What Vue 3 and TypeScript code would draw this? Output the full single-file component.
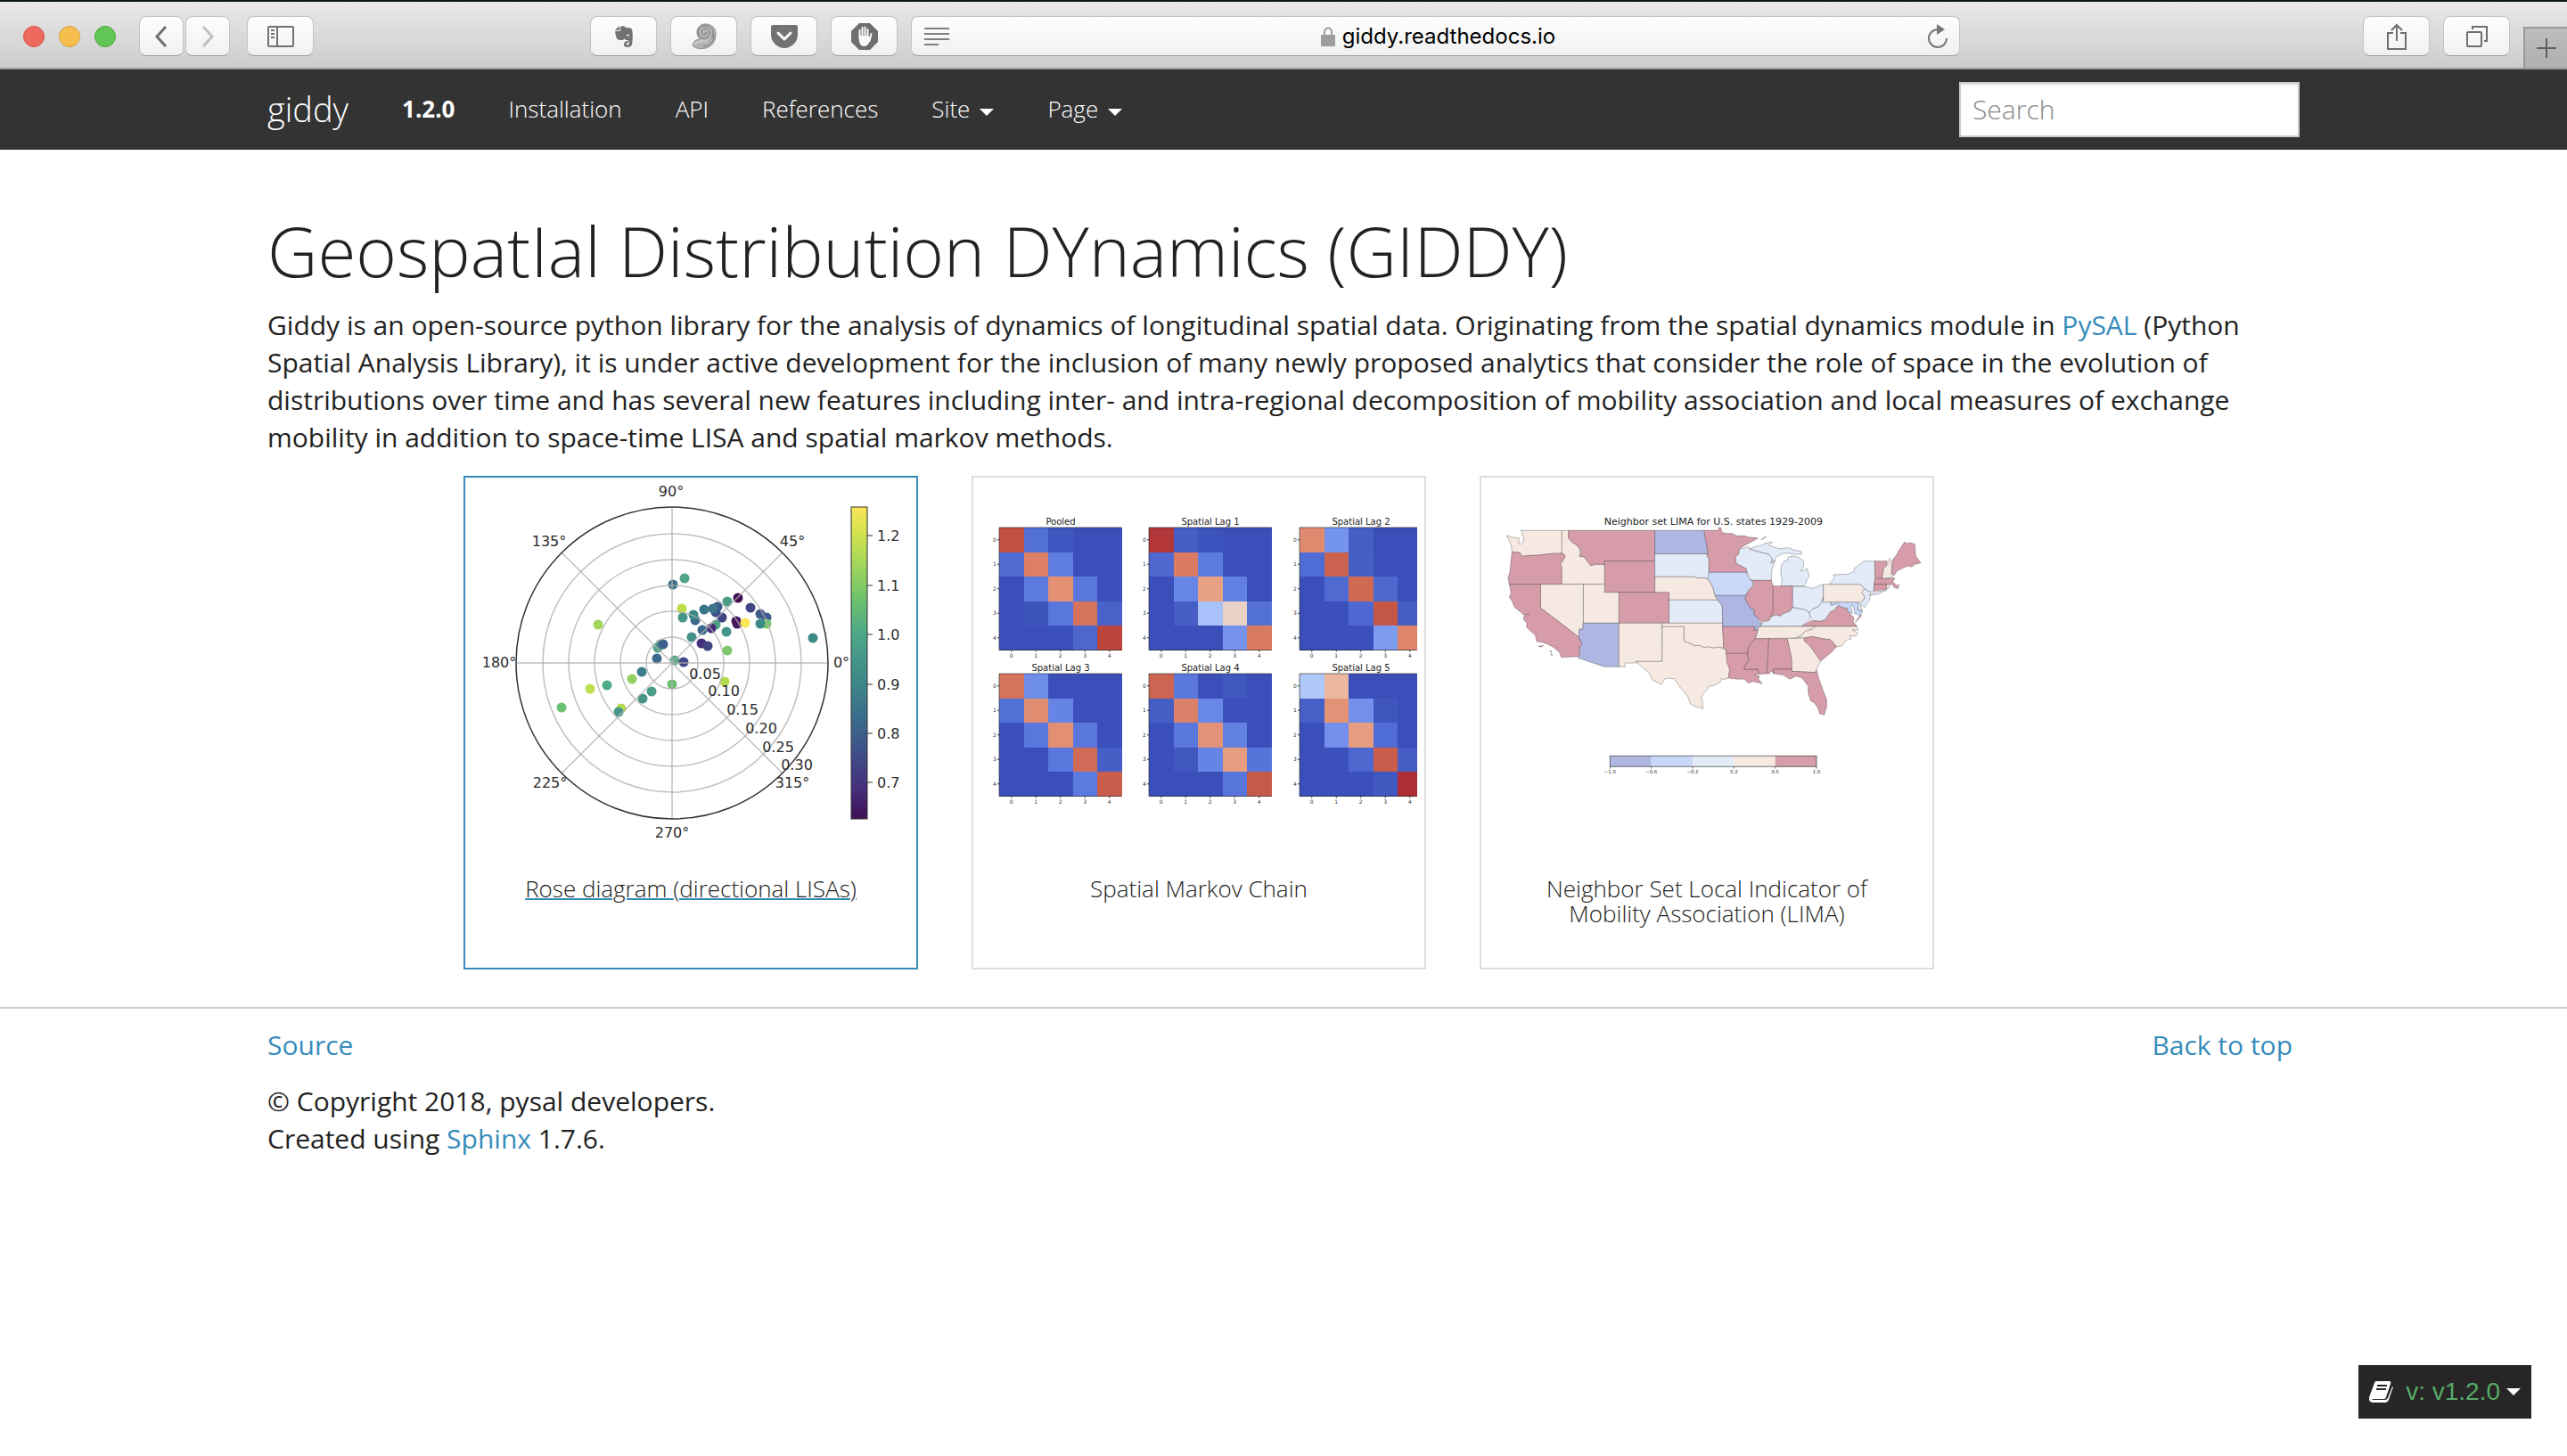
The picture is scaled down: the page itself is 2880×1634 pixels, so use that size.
<script setup lang="ts">
interface Dot { x: number; y: number; c: string }
interface Label { x: number; y: number; t: string }
interface Region { f: string; p: string }

const dots: Dot[] = ([
  [246, 113, '#4fa487'], [233, 120, '#3d7189'], [243, 147, '#bede48'], [244, 157, '#469486'],
  [258, 160, '#3b6a8d'], [256, 154, '#3a8a88'], [268, 148, '#37758a'], [281, 151, '#3b528a'],
  [283, 145, '#3b5c8c'], [278, 147, '#3a758b'], [294, 139, '#4c9e88'], [306, 135, '#3f0f54'],
  [288, 157, '#414584'], [281, 165, '#4fa186'], [276, 169, '#472b78'], [266, 171, '#3a6a8c'],
  [254, 179, '#43918a'], [265, 186, '#45307c'], [272, 189, '#424583'], [293, 173, '#45948a'],
  [304, 161, '#45195f'], [305, 164, '#45195f'], [314, 163, '#fbe555'], [320, 146, '#3f4483'],
  [331, 153, '#3f5a8b'], [338, 157, '#3d5b8b'], [338, 164, '#79c96a'], [331, 164, '#3b8b8a'],
  [294, 194, '#7ec66b'], [390, 180, '#3b8b88'], [149, 165, '#a2d55c'], [216, 191, '#4ea287'],
  [219, 187, '#469486'], [222, 187, '#3c5f8d'], [215, 203, '#3b6a8d'], [235, 205, '#56a989'],
  [245, 207, '#414584'], [198, 218, '#3c7f8b'], [187, 226, '#94d063'], [232, 232, '#6abf70'],
  [159, 233, '#4fab86'], [140, 237, '#bcde50'], [108, 258, '#69c371'], [209, 240, '#4a9e88'],
  [199, 248, '#469589'], [175, 259, '#b5db4c'], [172, 263, '#459889'], [291, 229, '#b2dc4c'],
] as [number, number, string][]).map(([x, y, c]) => ({ x, y, c }))

const rings = [29, 58, 87, 116, 145]

const angles: Label[] = [
  { x: 231, y: 21, t: '90°' }, { x: 367, y: 77, t: '45°' }, { x: 422, y: 213, t: '0°' },
  { x: 94, y: 77, t: '135°' }, { x: 38, y: 213, t: '180°' }, { x: 95, y: 348, t: '225°' },
  { x: 232, y: 404, t: '270°' }, { x: 367, y: 348, t: '315°' },
]
const radii: Label[] = [
  { x: 269, y: 226, t: '0.05' }, { x: 290, y: 245, t: '0.10' }, { x: 311, y: 266, t: '0.15' },
  { x: 332, y: 287, t: '0.20' }, { x: 351, y: 308, t: '0.25' }, { x: 372, y: 328, t: '0.30' },
]
const scaleTicks: Label[] = [
  { x: 462, y: 65, t: '1.2' }, { x: 462, y: 121, t: '1.1' }, { x: 462, y: 176, t: '1.0' },
  { x: 462, y: 232, t: '0.9' }, { x: 462, y: 287, t: '0.8' }, { x: 462, y: 342, t: '0.7' },
]
const viridis = ['#3f0f54', '#45307c', '#3f4b87', '#3a668b', '#3c7f8b', '#439488', '#4ea986', '#6cc06e', '#9bd35c', '#cbe14f', '#fbe555']

const low = '#3b4fbb'
const matrices = [
  { title: 'Pooled', x: 29, y: 56, rows: [
    ['#c25042', '#5370d6', '#3e56c0', low, low], ['#4f6ad1', '#dd7e65', '#5f7ee0', low, low],
    [low, '#5c7bdf', '#e38f73', '#5977dc', low], [low, '#3e54bd', '#5977dc', '#d5735c', '#4962ca'],
    [low, low, low, '#4d67cf', '#bb443d']] },
  { title: 'Spatial Lag 1', x: 197, y: 56, rows: [
    ['#b33639', '#455ec5', '#3c52bc', low, low], ['#4f69d1', '#db7b63', '#5c7bdf', low, low],
    [low, '#6787e6', '#e8a085', '#6180e1', low], [low, '#455dc4', '#a9c2fb', '#ead2c6', '#5270d5'],
    [low, low, low, '#7593ec', '#d97b62']] },
  { title: 'Spatial Lag 2', x: 366, y: 56, rows: [
    ['#e08b70', '#7494ed', '#455ec5', low, low], ['#4f6dd4', '#cb6350', '#455fc6', low, low],
    [low, '#4f6bd2', '#d06a54', '#4d68cf', low], [low, low, '#4e69d1', '#c45745', '#445cc3'],
    [low, low, low, '#7d9cf0', '#df856c']] },
  { title: 'Spatial Lag 3', x: 29, y: 220, rows: [
    ['#d5735c', '#6f8eea', low, low, low], ['#5270d5', '#e18d72', '#6584e4', low, low],
    [low, '#5977dc', '#e38f73', '#5a78dc', low], [low, low, '#5977dc', '#d06b57', '#465fc6'],
    [low, low, low, '#5c7adf', '#ca5e4c']] },
  { title: 'Spatial Lag 4', x: 197, y: 220, rows: [
    ['#cd6553', '#5a78dc', low, '#3f58c0', low], ['#445ec5', '#dc8169', '#6887e6', low, low],
    [low, '#5977dc', '#e29377', '#6281e1', low], [low, '#3f57be', '#6684e5', '#e79d80', '#5774da'],
    [low, low, low, '#5875db', '#c65a49']] },
  { title: 'Spatial Lag 5', x: 366, y: 220, rows: [
    ['#afc7f9', '#ecb79f', low, low, low], ['#4660c8', '#e29276', '#7290eb', '#3f56be', low],
    [low, '#7391ec', '#e79d80', '#4f6dd4', low], [low, low, '#4d67cf', '#c95c4a', '#445cc3'],
    [low, low, low, '#4059c1', '#ad2f35']] },
]
const cell = 27.5
/* The heat map picture is cut off at this x, through the last column of the right-hand grids. */
const cut = 498
const span = (left: number, width: number) => Math.min(width, cut - left)

const red = '#d69ca9'
const cream = '#f6e9e1'
const pale = '#e3ebf9'
const light = '#c9d7f9'
const violet = '#aeb6e1'

const west: Region[] = [
  { f: cream, p: '78,76 217,76 217,153 180,154 140,159 110,160 82,163 76,151 49,148 47,130 42,115 31,92 50,99 72,101 75,110 70,120 80,122 88,112 88,96 82,88 84,82' },
  { f: red, p: '49,148 76,151 82,163 110,160 140,159 180,154 220,153 229,162 221,178 212,190 217,200 217,257 40,257 36,236 42,215 45,185' },
  { f: cream, p: '217,76 239,76 239,102 252,116 268,126 278,138 277,163 290,164 302,178 314,194 340,190 361,190 361,257 217,257 217,200 212,190 221,178 229,162 220,153 217,153' },
  { f: red, p: '239,76 530,76 530,179 361,179 361,190 340,190 326,189 314,194 302,178 290,164 277,163 282,148 278,138 268,126 252,116 239,102' },
  { f: red, p: '361,179 530,179 530,284 361,284' },
  { f: cream, p: '289,257 361,257 361,284 409,284 409,388 289,388' },
  { f: cream, p: '145,257 289,257 289,388 287,409 276,408 274,435 145,336' },
  { f: red, p: '40,257 145,257 145,336 274,435 285,457 276,472 278,490 271,500 215,503 208,485 190,470 170,459 150,452 132,450 128,430 112,415 98,402 99,388 88,376 90,362 106,358 86,359 80,352 58,335 50,315 40,300 46,285' },
  { f: violet, p: '289,388 409,388 409,535 360,535 271,505 278,490 276,472 285,457 274,435 276,408 287,409' },
  { f: red, p: '409,284 578,284 578,388 409,388' },
  { f: cream, p: '409,388 554,388 554,517 467,517 470,522 430,522 430,535 409,535' },
  { f: violet, p: '530,76 696,76 703,100 705,130 710,155 530,155' },
  { f: pale, p: '530,155 709,155 705,162 712,170 712,230 708,240 700,236 675,236 660,232 530,232' },
  { f: cream, p: '530,232 660,232 675,236 700,236 710,244 718,255 726,270 730,290 743,310 578,310 578,284 530,284' },
  { f: pale, p: '578,310 743,310 750,320 757,332 758,388 578,388' },
  { f: cream, p: '554,388 758,388 758,402 761,440 761,472 745,468 730,472 712,468 695,470 680,463 665,464 645,455 628,450 628,400 555,400' },
  { f: cream, p: '555,400 628,400 628,450 645,455 665,464 680,463 695,470 712,468 730,472 745,468 770,478 770,490 778,520 782,545 777,573 762,578 754,574 750,586 730,598 712,600 708,610 695,622 686,640 690,652 692,676 668,670 650,660 640,634 612,600 595,575 565,573 552,595 520,578 514,560 490,538 467,517 554,517' },
  { f: red, p: '138,466 148,464 155,463 148,468' },
  { f: red, p: '178,480 183,484 180,487' },
  { f: red, p: '180,490 185,496 182,496' },
]

const east: Region[] = [
  { f: red, p: '6,76 55,76 55,66 63,68 65,82 82,86 100,86 115,94 140,94 155,98 187,102 150,122 125,137 122,155 112,165 113,185 130,195 148,205 150,217 22,217 22,170 15,162 19,152 15,130 8,95' },
  { f: pale, p: '125,137 140,136 155,130 160,140 200,150 225,157 235,170 230,188 246,176 236,200 232,220 232,244 165,244 150,217 148,205 130,195 113,185 112,165 122,155' },
  { f: pale, p: '158,138 180,130 200,126 212,118 236,115 224,126 240,132 260,137 290,134 310,142 332,146 335,155 310,157 290,152 268,154 250,165 235,184 234,168 222,155 200,150' },
  { f: pale, p: '265,263 268,240 264,220 265,195 276,178 282,182 290,165 305,162 325,167 340,180 341,195 332,212 342,210 352,204 360,230 352,240 348,256 342,263' },
  { f: light, p: '22,217 150,217 152,230 160,242 172,250 172,262 160,273 152,280 148,295 42,295 36,270 28,250 18,238' },
  { f: red, p: '165,244 232,244 238,263 238,345 232,365 226,378 210,380 197,384 188,372 172,358 175,345 160,335 143,306 148,292 160,273 172,262 172,250' },
  { f: red, p: '238,263 304,263 304,335 295,348 275,355 262,364 245,360 228,368 238,345' },
  { f: pale, p: '304,265 345,265 370,271 407,257 407,300 400,320 388,335 375,338 360,352 350,345 330,340 304,335' },
  { f: violet, p: '42,295 148,295 143,306 160,335 175,345 172,358 188,372 190,385 200,388 196,400 190,400 186,412 172,412 178,400 68,400 67,330 52,312' },
  { f: pale, p: '196,398 203,386 226,378 228,368 245,360 262,364 275,355 295,348 304,335 330,340 350,345 358,352 365,370 350,385 335,398' },
  { f: pale, p: '360,352 375,338 388,335 400,320 407,300 407,317 433,317 433,328 455,320 468,328 455,330 430,355 415,375 400,382 375,380 362,366' },
  { f: red, p: '335,398 365,380 400,382 415,375 430,350 445,345 455,330 470,335 490,340 496,355 510,370 508,384 520,398' },
  { f: red, p: '515,384 530,362 536,362 524,376' },
  { f: light, p: '433,317 523,317 525,345 540,348 532,362 512,355 510,338 506,325 500,335 505,355 490,350 488,338 470,335 455,322 433,328' },
  { f: pale, p: '523,317 530,322 538,345 525,345' },
  { f: cream, p: '407,257 530,257 547,272 537,285 548,303 530,317 407,317' },
  { f: pale, p: '545,272 566,283 562,310 545,335 532,325 548,303 537,285' },
  { f: pale, p: '427,257 445,235 440,225 490,223 510,215 512,203 545,179 580,179 580,240 577,280 566,283 545,272 532,257' },
  { f: pale, p: '563,294 580,284 618,277 592,290' },
  { f: red, p: '580,179 622,179 620,195 610,202 605,238 582,238' },
  { f: cream, p: '624,190 630,170 636,180 637,226 640,234 605,238 610,202 620,195' },
  { f: red, p: '637,222 640,175 652,160 662,142 680,115 690,120 700,117 715,122 718,162 735,185 715,190 705,198 690,196 670,205 655,212 645,228' },
  { f: red, p: '582,238 637,237 648,236 640,250 660,264 662,256 658,272 646,268 638,257 578,257' },
  { f: red, p: '578,257 620,257 620,274 577,280' },
  { f: cream, p: '620,257 630,257 630,268 620,274' },
  { f: cream, p: '190,400 380,399 370,408 345,416 335,428 316,438 178,440 186,412' },
  { f: cream, p: '380,399 520,399 524,412 505,410 524,422 516,432 495,430 502,440 484,446 470,465 452,467 430,443 400,440 370,433 343,438 316,438 335,428 345,416 370,408' },
  { f: red, p: '68,400 178,400 172,412 186,412 178,440 165,455 155,470 152,490 80,490 80,478 71,472' },
  { f: red, p: '80,490 152,490 156,510 145,530 140,543 186,543 190,558 175,562 192,566 188,576 202,592 186,588 170,584 155,590 140,576 120,577 88,573 92,545 82,520' },
  { f: red, p: '178,440 224,440 217,558 190,560 186,543 140,543 145,530 156,510 152,490 155,470 165,455' },
  { f: red, p: '224,440 286,440 295,480 301,510 300,543 238,543 240,558 230,548 226,558 217,558' },
  { f: cream, p: '286,440 343,438 343,448 360,462 380,490 398,515 390,530 384,546 380,554 302,550 301,510 295,480' },
  { f: red, p: '343,438 370,433 400,440 430,443 452,467 430,490 415,502 398,515 380,490 360,462 343,448' },
  { f: red, p: '238,543 300,543 302,550 380,554 384,546 392,575 404,608 418,645 418,670 410,697 395,693 388,672 376,656 365,650 356,625 356,600 335,572 315,566 295,577 270,562 240,558' },
  { f: pale, p: '197,107 208,99 216,97 206,104' },
]

const bands = [violet, light, pale, cream, red]
const bandLabels = ['−1.0', '−0.6', '−0.2', '0.2', '0.6', '1.0']
</script>

<template>
  <div class="window">
    <header class="toolbar">
      <div class="side">
        <div class="lights">
          <button class="light close" aria-label="Close"></button>
          <button class="light minimise" aria-label="Minimise"></button>
          <button class="light expand" aria-label="Full screen"></button>
        </div>
        <div class="history">
          <button class="tool narrow" aria-label="Back">
            <svg width="16" height="26" viewBox="0 0 16 26"><path d="M13 2 3 13l10 11" fill="none" stroke="#6f6f6f" stroke-width="3" /></svg>
          </button>
          <button class="tool narrow" aria-label="Forward">
            <svg width="16" height="26" viewBox="0 0 16 26"><path d="m3 2 10 11L3 24" fill="none" stroke="#c0c0c0" stroke-width="3" /></svg>
          </button>
        </div>
        <button class="tool" aria-label="Sidebar">
          <svg width="30" height="24" viewBox="0 0 30 24" fill="none" stroke="#727272" stroke-width="2">
            <rect x="1" y="1" width="28" height="22" rx="1" /><path d="M11 1v22M4 5h4M4 9h4M4 13h4" />
          </svg>
        </button>
      </div>

      <div class="centre">
        <button class="tool" aria-label="Evernote">
          <svg width="20" height="24" viewBox="0 0 20 24">
            <path fill="#727272" d="M5 0v5H0L5 0zM6 1c2-1 5-1 6 1 3 0 6 0 7 2 1 4 1 12 0 17-1 2-2 3-5 3-3 0-4-1-4-3 0-3 2-4 5-4v2c-2 0-3 1-2 2s3 0 3-2c0-2-1-3-3-3s-2-1-2-2c-1 2-3 2-5 2-4 0-5-3-6-10h5c1 0 1-1 1-5z" />
            <path fill="#f8f8f8" d="M13 11c0-2 3-2 3 1-1-1-2-1-3-1z" />
          </svg>
        </button>
        <button class="tool" aria-label="Shell">
          <svg width="30" height="30" viewBox="0 0 30 30" fill="none">
            <path d="M16 1c8 0 12 5 12 11 0 8-4 14-11 16-6 1-11 1-15-3 1-5 4-7 9-7-3-2-4-5-4-8 0-5 4-9 9-9z" fill="#b4b4b4" stroke="#8a8a8a" />
            <path d="M26 13c0 8-5 13-12 13M19 20c4-2 6-5 6-9 0-5-4-8-9-8s-8 3-8 7 3 7 7 7 6-3 6-6-2-5-5-5-4 2-4 4 1 3 3 3 2-1 2-3" stroke="#747474" stroke-width="1" />
            <path d="M4 24c3-3 5-3 9-3M11 19c4 2 8 2 12-3" stroke="#e0e0e0" stroke-width="1" />
          </svg>
        </button>
        <button class="tool" aria-label="Pocket">
          <svg width="30" height="26" viewBox="0 0 30 26">
            <path fill="#727272" d="M2 0h26c1 0 2 1 2 2v9c0 8-7 15-15 15S0 19 0 11V2c0-1 1-2 2-2z" />
            <path d="m8 9 7 7 7-7" fill="none" stroke="#fafafa" stroke-width="3" stroke-linecap="round" stroke-linejoin="round" />
          </svg>
        </button>
        <button class="tool" aria-label="AdBlock">
          <svg width="30" height="30" viewBox="0 0 30 30">
            <path fill="#6e6e6e" d="M9 0h12l9 9v12l-9 9H9l-9-9V9z" />
            <path fill="none" stroke="#fafafa" stroke-width="2" stroke-linecap="round" d="M9.500 16V8M12.500 14V5M15.500 14V4.500M18.500 14V7M20.500 20l2-8" />
            <path fill="#fafafa" d="M8.500 14h11l2 3c-1 5-3 9-7 9-5 0-6-5-6-12z" />
          </svg>
        </button>
        <div class="address">
          <svg width="28" height="22" viewBox="0 0 28 22" stroke="#7f7f7f" stroke-width="2"><path d="M0 2h28M0 8h28M0 14h28M0 20h16" /></svg>
          <label class="location">
            <svg width="16" height="22" viewBox="0 0 16 22"><path d="M4 10V6c0-6 8-6 8 0v4" fill="none" stroke="#9d9d9d" stroke-width="2" /><rect y="9" width="16" height="13" rx="1" fill="#9d9d9d" /></svg>
            <input class="url" type="text" value="giddy.readthedocs.io" aria-label="Address">
          </label>
          <button class="reload" aria-label="Reload">
            <svg width="24" height="28" viewBox="0 0 24 28"><path d="M12 6a10 10 0 1 0 10 10" fill="none" stroke="#777" stroke-width="2" /><path d="M11 0v12l9-6z" fill="#777" /></svg>
          </button>
        </div>
      </div>

      <div class="side end">
        <button class="tool" aria-label="Share">
          <svg width="24" height="30" viewBox="0 0 24 30" fill="none" stroke="#6e6e6e" stroke-width="2"><path d="M8 11H2v18h20V11h-6M12 20V2M6 8l6-6 6 6" /></svg>
        </button>
        <button class="tool" aria-label="Show all tabs">
          <svg width="24" height="24" viewBox="0 0 24 24" fill="none" stroke="#6e6e6e" stroke-width="2"><rect x="1" y="7" width="16" height="16" rx="1" /><path d="M7 4V1h16v16h-3" /></svg>
        </button>
        <button class="new-tab" aria-label="New tab">
          <svg width="22" height="22" viewBox="0 0 22 22" stroke="#5f5f5f" stroke-width="2"><path d="M11 0v22M0 11h22" /></svg>
        </button>
      </div>
    </header>

    <nav class="navbar">
      <div class="container bar">
        <a class="brand" href="#">giddy</a>
        <span class="release">1.2.0</span>
        <a class="link" href="#installation">Installation</a>
        <a class="link" href="#api">API</a>
        <a class="link" href="#references">References</a>
        <button class="link">Site<span class="caret"></span></button>
        <button class="link">Page<span class="caret"></span></button>
        <form class="search"><input type="text" placeholder="Search" aria-label="Search"></form>
      </div>
    </nav>

    <main class="container">
      <h1>GeospatIal Distribution DYnamics (GIDDY)</h1>
      <p>
        Giddy is an open-source python library for the analysis of dynamics of longitudinal spatial data. Originating from the spatial dynamics module in <a href="#pysal">PySAL</a> (Python Spatial Analysis Library), it is under active development for the inclusion of many newly proposed analytics that consider the role of space in the evolution of distributions over time and has several new features including inter- and intra-regional decomposition of mobility association and local measures of exchange mobility in addition to space-time LISA and spatial markov methods.
      </p>

      <div class="gallery">
        <a class="card active" href="#rose">
          <svg class="figure" viewBox="0 0 506 420">
            <defs>
              <linearGradient id="viridis" x1="0" y1="1" x2="0" y2="0">
                <stop v-for="(c, i) in viridis" :key="c" :offset="i / 10" :stop-color="c" />
              </linearGradient>
            </defs>
            <circle v-for="(d, i) in dots" :key="i" :cx="d.x" :cy="d.y" r="5.500" :fill="d.c" />
            <g class="grid">
              <circle v-for="r in rings" :key="r" cx="232" cy="208" :r="r" />
              <path d="M57 208h350M232 33v350M108 84l248 248M108 332 356 84" />
            </g>
            <circle class="rim" cx="232" cy="208" r="175" />
            <g class="plot-text middle">
              <text v-for="l in angles" :key="l.t" :x="l.x" :y="l.y">{{ l.t }}</text>
              <text v-for="l in radii" :key="l.t" :x="l.x" :y="l.y">{{ l.t }}</text>
            </g>
            <rect x="433" y="33" width="18" height="350" fill="url(#viridis)" stroke="#333" />
            <g class="plot-text">
              <template v-for="l in scaleTicks" :key="l.t">
                <path :d="`M451 ${l.y}h6`" stroke="#333" />
                <text :x="l.x" :y="l.y + 6">{{ l.t }}</text>
              </template>
            </g>
          </svg>
          <span class="caption">Rose diagram (directional LISAs)</span>
        </a>

        <a class="card" href="#markov">
          <svg class="figure" viewBox="0 0 506 420">
            <g v-for="m in matrices" :key="m.title">
              <text class="matrix-title" :x="m.x + 69" :y="m.y - 3">{{ m.title }}</text>
              <g v-for="(row, r) in m.rows" :key="r">
                <rect v-for="(c, k) in row" :key="k" :x="m.x + k * cell" :y="m.y + r * cell" :width="span(m.x + k * cell, cell)" :height="cell" :fill="c" shape-rendering="crispEdges" />
                <path class="tick" :d="`M${m.x - 2} ${m.y + (r + 0.5) * cell}h2M${m.x + (r + 0.5) * cell} ${m.y + 5 * cell}v2`" />
                <text class="tick-text" :x="m.x - 5" :y="m.y + (r + 0.5) * cell + 2">{{ r }}</text>
                <text class="tick-text" :x="m.x + (r + 0.5) * cell" :y="m.y + 5 * cell + 8">{{ r }}</text>
              </g>
              <path class="matrix-frame" :d="`M${m.x + span(m.x, 5 * cell)} ${m.y}H${m.x}v${5 * cell}H${m.x + span(m.x, 5 * cell)}`" />
            </g>
          </svg>
          <span class="caption">Spatial Markov Chain</span>
        </a>

        <a class="card" href="#lima">
          <svg class="figure" viewBox="0 0 1518 1260">
            <text class="map-title" x="781" y="158">Neighbor set LIMA for U.S. states 1929-2009</text>
            <g class="states" transform="translate(54 102)">
              <polygon v-for="(s, i) in west" :key="i" :points="s.p" :fill="s.f" />
              <g transform="translate(690 0)">
                <polygon v-for="(s, i) in east" :key="i" :points="s.p" :fill="s.f" />
              </g>
            </g>
            <rect v-for="(b, i) in bands" :key="b" :x="433 + i * 139" y="937" width="139" height="36" :fill="b" />
            <rect class="legend-frame" x="433" y="937" width="695" height="36" />
            <g v-for="(t, i) in bandLabels" :key="t">
              <path class="legend-tick" :d="`M${433 + i * 139} 973v7`" />
              <text class="legend-text" :x="433 + i * 139" y="997">{{ t }}</text>
            </g>
          </svg>
          <span class="caption">Neighbor Set Local Indicator of Mobility Association (LIMA)</span>
        </a>
      </div>
    </main>

    <footer>
      <div class="container">
        <div class="foot-links">
          <a href="#source">Source</a>
          <a href="#top">Back to top</a>
        </div>
        <p>© Copyright 2018, pysal developers.<br>Created using <a href="#sphinx">Sphinx</a> 1.7.6.</p>
      </div>
    </footer>

    <button class="versions">
      <svg width="28" height="24" viewBox="0 0 28 24">
        <path fill="#fff" d="M8 0h14c2 0 3 1 2 3l-5 15c0 1-1 2-3 2H4c-1 0-1 1 0 1h14c1 0 2-1 3-2l5-13c1 1 1 1 0 3l-4 12c-1 2-2 3-4 3H4c-3 0-5-3-4-6L6 2c0-1 1-2 2-2z" />
        <path d="M9 5h11M8 9h11" stroke="#272525" stroke-width="2" />
      </svg>
      <span>v: v1.2.0</span>
      <svg width="16" height="8" viewBox="0 0 16 8"><path d="M0 0h16L8 8z" fill="#fff" /></svg>
    </button>
  </div>
</template>

<style>
html, body { background: #fff; }
</style>

<style scoped>
* { box-sizing: border-box; }
.window { position: relative; min-height: 100vh; background: #fff; color: #222; font: 30px/42px "Open Sans", sans-serif; }
button, input { font: inherit; margin: 0; padding: 0; border: 0; background: none; color: inherit; }
a { color: #368cba; text-decoration: none; }
svg { flex: none; }

.toolbar { display: grid; grid-template-columns: 662fr 1537fr 681fr; background: linear-gradient(#e8e8e8, #cdcdcd); border-top: 2px solid #0a140e; border-bottom: 2px solid #999; }
.side, .centre { display: flex; padding: 16px 0 13px; }
.side { padding-left: 26px; }
.side.end { padding: 0; justify-content: flex-end; }
.side.end .tool { margin: 16px 15px 13px 0; }
.lights { display: flex; align-items: center; gap: 16px; margin-right: 26px; }
.light { width: 24px; height: 24px; border-radius: 50%; border: 1px solid; }
.close { background: #ee6a5f; border-color: #d95448; }
.minimise { background: #f6be4f; border-color: #d9a13a; }
.expand { background: #61c654; border-color: #4ca93d; }
.history { display: flex; gap: 2px; margin-right: 19px; }
.tool { display: flex; align-items: center; justify-content: center; width: 75px; height: 45px; border: 1px solid #c4c4c4; border-bottom-color: #9c9c9c; border-radius: 8px; background: linear-gradient(#fefefe, #f0f0f0); }
.tool.narrow { width: 50px; }
.centre { gap: 15px; }
.address { flex: 1; display: flex; align-items: center; height: 45px; padding: 0 12px 0 14px; border: 1px solid #c4c4c4; border-bottom-color: #9c9c9c; border-radius: 8px; background: linear-gradient(#fefefe, #f0f0f0); }
.location { flex: 1; display: flex; align-items: center; justify-content: center; gap: 8px; }
.url { field-sizing: content; color: #000; font: 24px/32px Inter, sans-serif; }
.reload { display: flex; }
.new-tab { display: flex; align-items: center; justify-content: center; align-self: flex-end; width: 49px; height: 46px; border: solid #999; border-width: 2px 0 0 2px; background: linear-gradient(#bdbdbd, #b0b0b0); }

.container { max-width: 2340px; margin: 0 auto; padding: 0 30px; }
.navbar { background: #333; color: #fff; font-size: 26px; font-weight: 300; }
.bar { display: flex; align-items: center; min-height: 90px; }
.brand, .release, .link { padding-bottom: 2px; }
.brand { margin-right: 30px; color: #fff; font-size: 38px; }
.release { padding-left: 30px; padding-right: 30px; font-weight: 700; }
.link { display: flex; align-items: center; padding-left: 30px; padding-right: 30px; color: #fff; }
.caret { margin: 8px 0 0 11px; border: 8px solid transparent; border-top-color: #fff; border-bottom: 0; }
.search { margin-left: auto; width: 382px; }
.search input { display: block; width: 100%; height: 62px; padding: 0 13px 2px; border: 2px solid #ccc; background: #fff; box-shadow: inset 0 2px 2px rgba(0, 0, 0, 0.08); color: #222; font-size: 30px; font-weight: 300; }
.search input::placeholder { color: #888; opacity: 1; }

h1 { margin: 70px 0 20px; font-size: 78px; line-height: 86px; font-weight: 300; }
p { margin: 0; }
.gallery { display: flex; flex-wrap: wrap; gap: 60px; margin: 22px 0 42px; padding-left: 220px; }
.card { width: 510px; min-height: 554px; border: 2px solid #ddd; color: #222; text-align: center; }
.active { border-color: #368cba; }
.figure { display: block; width: 100%; }
.caption { display: block; margin: 27px 60px 0; font-size: 26px; line-height: 28px; font-weight: 300; }
.active .caption { text-decoration: underline #368cba 2px; margin: 27px 30px 0; }

.grid { fill: none; stroke: #b0b0b0; stroke-opacity: 0.8; stroke-width: 1.500; }
.rim { fill: none; stroke: #333; stroke-width: 1.500; }
.plot-text { font: 16px "DejaVu Sans", sans-serif; fill: #2b2b2b; }
.middle { text-anchor: middle; }
.matrix-title { font: 10px "DejaVu Sans", sans-serif; fill: #222; text-anchor: middle; }
.tick { stroke: #333; stroke-width: 1; }
.tick-text { font: 6px "DejaVu Sans", sans-serif; fill: #333; text-anchor: middle; }
.matrix-frame { fill: none; stroke: #222; stroke-opacity: 0.6; }
.map-title { font: 33px "DejaVu Sans", sans-serif; fill: #222; text-anchor: middle; }
.states { stroke: #222; stroke-opacity: 0.45; stroke-width: 2; stroke-linejoin: round; }
.legend-frame { fill: none; stroke: #222; stroke-opacity: 0.6; stroke-width: 3; }
.legend-tick { stroke: #333; stroke-width: 2; }
.legend-text { font: 16px "DejaVu Sans", sans-serif; fill: #333; text-anchor: middle; }

footer { padding-top: 20px; border-top: 2px solid #ccc; }
.foot-links { display: flex; justify-content: space-between; margin-bottom: 21px; padding-right: 8px; }

.versions { position: fixed; right: 40px; bottom: 42px; display: flex; align-items: center; height: 60px; padding: 0 12px; background: #272525; color: #55ab68; font: 28px/32px "Liberation Sans", Arial, sans-serif; }
.versions span { margin: 0 7px 0 13px; }
</style>
